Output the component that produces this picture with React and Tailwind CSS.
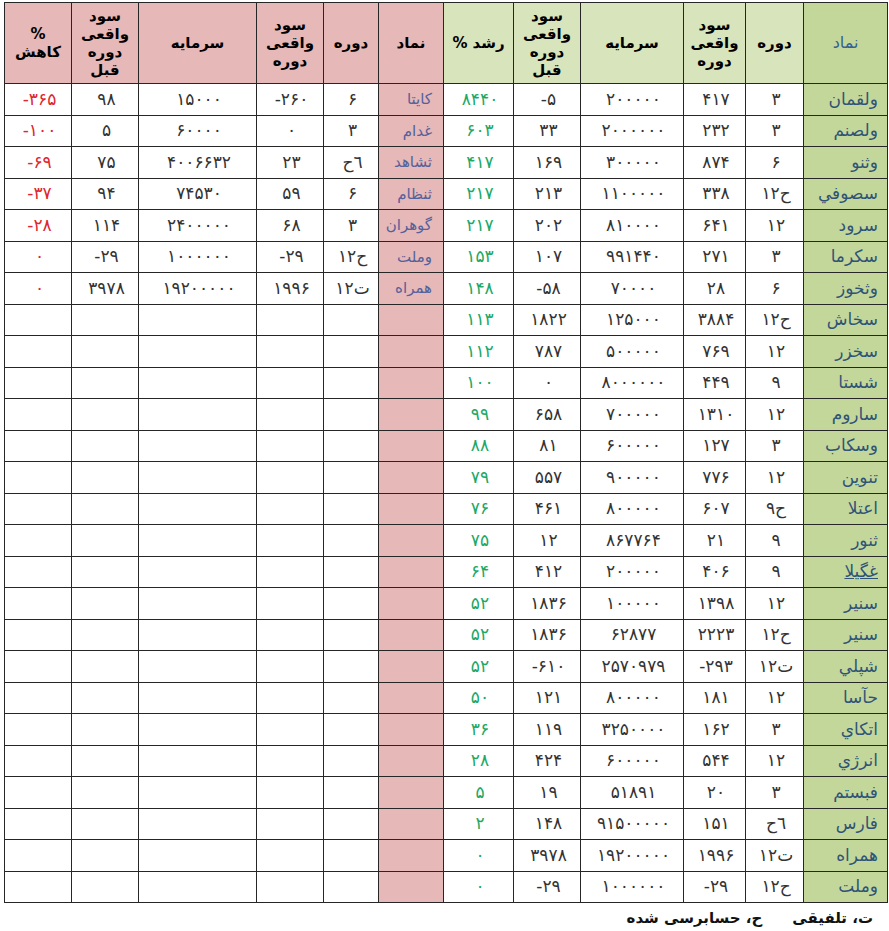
import React from 'react';

const growth = [
  ['ولقمان', '۳', '۴۱۷', '۲۰۰۰۰۰', '-۵', '۸۴۴۰'],
  ['ولصنم', '۳', '۲۳۲', '۲۰۰۰۰۰۰', '۳۳', '۶۰۳'],
  ['وثنو', '۶', '۸۷۴', '۳۰۰۰۰۰', '۱۶۹', '۴۱۷'],
  ['سصوفي', '۱۲ح', '۳۳۸', '۱۱۰۰۰۰۰', '۲۱۳', '۲۱۷'],
  ['سرود', '۱۲', '۶۴۱', '۸۱۰۰۰۰', '۲۰۲', '۲۱۷'],
  ['سکرما', '۳', '۲۷۱', '۹۹۱۴۴۰', '۱۰۷', '۱۵۳'],
  ['وثخوز', '۶', '۲۸', '۷۰۰۰۰', '-۵۸', '۱۴۸'],
  ['سخاش', '۱۲ح', '۳۸۸۴', '۱۲۵۰۰۰', '۱۸۲۲', '۱۱۳'],
  ['سخزر', '۱۲', '۷۶۹', '۵۰۰۰۰۰', '۷۸۷', '۱۱۲'],
  ['شستا', '۹', '۴۴۹', '۸۰۰۰۰۰۰', '۰', '۱۰۰'],
  ['ساروم', '۱۲', '۱۳۱۰', '۷۰۰۰۰۰', '۶۵۸', '۹۹'],
  ['وسکاب', '۳', '۱۲۷', '۶۰۰۰۰۰', '۸۱', '۸۸'],
  ['تنوین', '۱۲', '۷۷۶', '۹۰۰۰۰۰', '۵۵۷', '۷۹'],
  ['اعتلا', '۹ح', '۶۰۷', '۸۰۰۰۰۰', '۴۶۱', '۷۶'],
  ['ثنور', '۹', '۲۱', '۸۶۷۷۶۴', '۱۲', '۷۵'],
  ['غگیلا', '۹', '۴۰۶', '۲۰۰۰۰۰', '۴۱۲', '۶۴'],
  ['سنیر', '۱۲', '۱۳۹۸', '۱۰۰۰۰۰', '۱۸۳۶', '۵۲'],
  ['سنیر', '۱۲ح', '۲۲۲۳', '۶۲۸۷۷', '۱۸۳۶', '۵۲'],
  ['شپلي', '۱۲ت', '-۲۹۳', '۲۵۷۰۹۷۹', '-۶۱۰', '۵۲'],
  ['حآسا', '۱۲', '۱۸۱', '۸۰۰۰۰۰', '۱۲۱', '۵۰'],
  ['اتکاي', '۳', '۱۶۲', '۳۲۵۰۰۰۰', '۱۱۹', '۳۶'],
  ['انرژي', '۱۲', '۵۴۴', '۶۰۰۰۰۰', '۴۲۴', '۲۸'],
  ['فبستم', '۳', '۲۰', '۵۱۸۹۱', '۱۹', '۵'],
  ['فارس', '٦ح', '۱۵۱', '۹۱۵۰۰۰۰۰', '۱۴۸', '۲'],
  ['همراه', '۱۲ت', '۱۹۹۶', '۱۹۲۰۰۰۰۰', '۳۹۷۸', '۰'],
  ['وملت', '۱۲ح', '-۲۹', '۱۰۰۰۰۰۰', '-۲۹', '۰'],
];

const drop = [
  ['کایتا', '۶', '-۲۶۰', '۱۵۰۰۰', '۹۸', '-۳۶۵'],
  ['غدام', '۳', '۰', '۶۰۰۰۰', '۵', '-۱۰۰'],
  ['ثشاهد', '٦ح', '۲۳', '۴۰۰۶۶۳۲', '۷۵', '-۶۹'],
  ['ثنظام', '۶', '۵۹', '۷۴۵۳۰', '۹۴', '-۳۷'],
  ['گوهران', '۳', '۶۸', '۲۴۰۰۰۰۰', '۱۱۴', '-۲۸'],
  ['وملت', '۱۲ح', '-۲۹', '۱۰۰۰۰۰۰', '-۲۹', '۰'],
  ['همراه', '۱۲ت', '۱۹۹۶', '۱۹۲۰۰۰۰۰', '۳۹۷۸', '۰'],
];

const cell = 'border border-[#262626] p-0';
const num = cell + ' text-center text-[17px] tracking-[2.8px] pl-[3px] text-[#333]';

const Head = ({ children, className }) => (
  <th className={cell + ' font-bold text-[15px] leading-[18px] text-black align-middle ' + className}>{children}</th>
);

const App = () => {
  return (
    <div className="bg-white w-[889px] h-[931px] overflow-hidden" style={{ fontFamily: '"DejaVu Sans", sans-serif' }}>
      <div className="pt-[2px] pl-[4px]">
        <table dir="rtl" className="border-collapse table-fixed w-[883px]">
          <colgroup>
            <col className="w-[84px]" />
            <col className="w-[58px]" />
            <col className="w-[62px]" />
            <col className="w-[103px]" />
            <col className="w-[67px]" />
            <col className="w-[70px]" />
            <col className="w-[65px]" />
            <col className="w-[55px]" />
            <col className="w-[67px]" />
            <col className="w-[118px]" />
            <col className="w-[67px]" />
            <col className="w-[67px]" />
          </colgroup>
          <thead>
            <tr className="h-[81px]">
              <th className={cell + ' bg-[#c4d79b] text-[16px] font-normal text-[#366092]'}>نماد</th>
              <Head className="bg-[#d8e4bc]">دوره</Head>
              <Head className="bg-[#d8e4bc]">سود<br />واقعی<br />دوره</Head>
              <Head className="bg-[#d8e4bc]">سرمایه</Head>
              <Head className="bg-[#d8e4bc]">سود<br />واقعی<br />دوره<br />قبل</Head>
              <Head className="bg-[#d8e4bc]">
                <div dir="ltr" className="flex justify-center gap-[5px]">
                  <span>%</span>
                  <span>رشد</span>
                </div>
              </Head>
              <Head className="bg-[#e6b8b7]">نماد</Head>
              <Head className="bg-[#e6b8b7]">دوره</Head>
              <Head className="bg-[#e6b8b7]">سود<br />واقعی<br />دوره</Head>
              <Head className="bg-[#e6b8b7]">سرمایه</Head>
              <Head className="bg-[#e6b8b7]">سود<br />واقعی<br />دوره<br />قبل</Head>
              <Head className="bg-[#e6b8b7]">%<br />کاهش</Head>
            </tr>
          </thead>
          <tbody>
            {growth.map((g, i) => {
              const d = drop[i];
              return (
                <tr key={i} className="h-[31.5px]">
                  <td className={cell + ' bg-[#c4d79b] text-right pr-[9px] text-[17px] text-[#2f5377]'}>
                    <span className={g[0] === 'غگیلا' ? 'underline' : ''}>{g[0]}</span>
                  </td>
                  <td className={num} dir="ltr">{g[1]}</td>
                  <td className={num} dir="ltr">{g[2]}</td>
                  <td className={num} dir="ltr">{g[3]}</td>
                  <td className={num} dir="ltr">{g[4]}</td>
                  <td className={num + ' !text-[#21a865]'} dir="ltr">{g[5]}</td>
                  <td className={cell + ' bg-[#e6b8b7] text-right pr-[11px] text-[15px] text-[#54619c]'}>{d ? d[0] : ''}</td>
                  <td className={num} dir="ltr">{d ? d[1] : ''}</td>
                  <td className={num} dir="ltr">{d ? d[2] : ''}</td>
                  <td className={num} dir="ltr">{d ? d[3] : ''}</td>
                  <td className={num} dir="ltr">{d ? d[4] : ''}</td>
                  <td className={num + ' !text-[#e0262e]'} dir="ltr">{d ? d[5] : ''}</td>
                </tr>
              );
            })}
          </tbody>
        </table>
        <div dir="rtl" className="pr-[14px] pt-[4px] text-[15px] font-bold text-[#111] w-[883px]">
          ت، تلفیقی<span className="inline-block w-[30px]"></span>ح، حسابرسی شده
        </div>
      </div>
    </div>
  );
};

export default App;
